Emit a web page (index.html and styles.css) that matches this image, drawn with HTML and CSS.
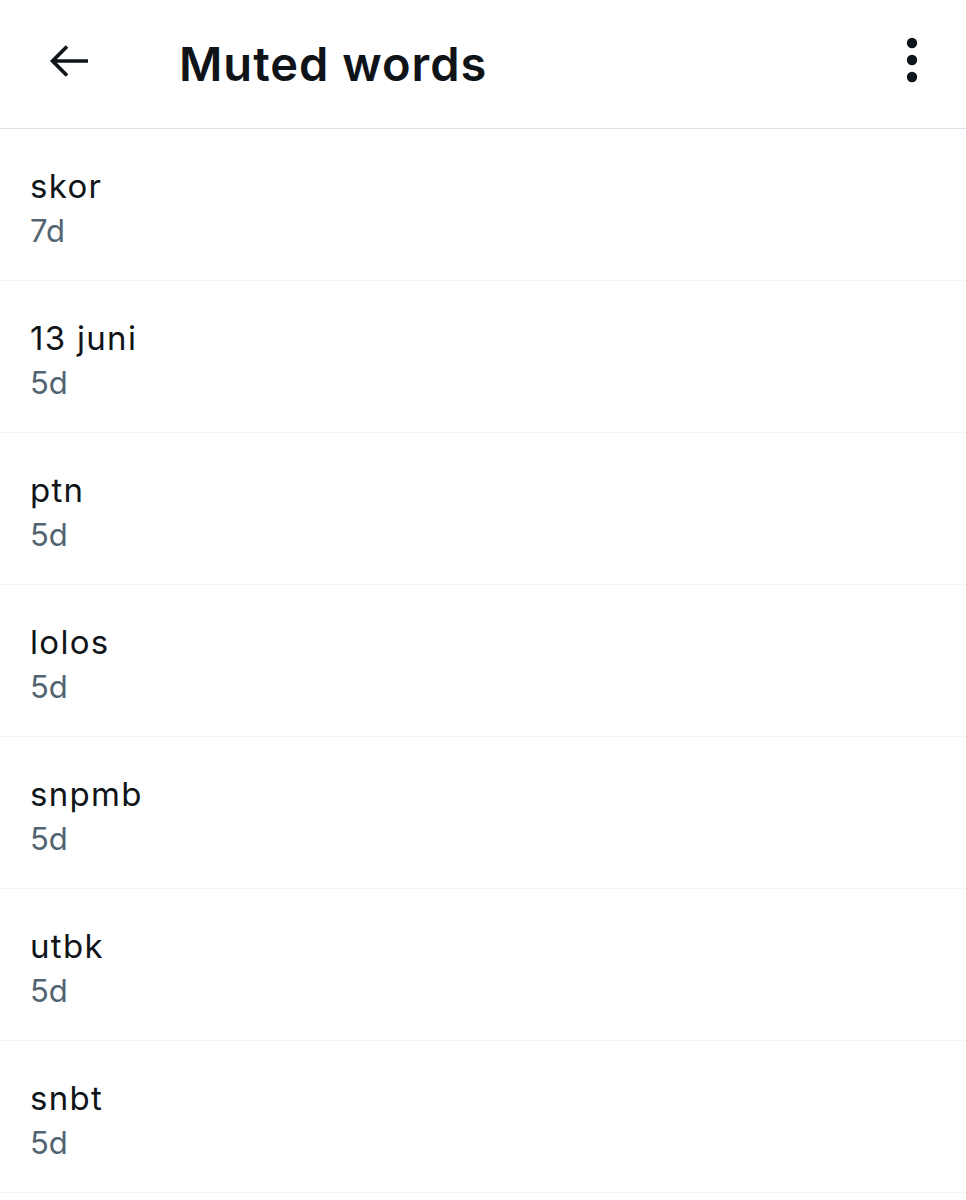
FILE: index.html
```html
<!DOCTYPE html>
<html>
<head>
<meta charset="utf-8">
<link rel="stylesheet" href="styles.css">
</head>
<body>
<header class="topbar">
  <div class="back">
    <svg width="44" height="44" viewBox="0 0 44 44"><path d="M42 22H8M21 7.5L6.5 22 21 36.5" fill="none" stroke="#0f1419" stroke-width="3.6" stroke-linecap="butt"/></svg>
  </div>
  <h1 class="title">Muted words</h1>
  <div class="more">
    <svg width="12" height="46" viewBox="0 0 12 46"><circle cx="6" cy="6" r="5.2" fill="#0f1419"/><circle cx="6" cy="23" r="5.2" fill="#0f1419"/><circle cx="6" cy="40" r="5.2" fill="#0f1419"/></svg>
  </div>
</header>
<ul class="list">
  <li class="item"><div class="word">skor</div><div class="age">7d</div></li>
  <li class="item"><div class="word">13 juni</div><div class="age">5d</div></li>
  <li class="item"><div class="word">ptn</div><div class="age">5d</div></li>
  <li class="item"><div class="word">lolos</div><div class="age">5d</div></li>
  <li class="item"><div class="word">snpmb</div><div class="age">5d</div></li>
  <li class="item"><div class="word">utbk</div><div class="age">5d</div></li>
  <li class="item"><div class="word">snbt</div><div class="age">5d</div></li>
</ul>
</body>
</html>
```
FILE: styles.css
```css
* { box-sizing: border-box; }
html, body { margin: 0; padding: 0; background: #fff; }
body { font-family: Inter, "Noto Sans", sans-serif; color: #0f1419; width: 966px; }
.topbar {
  height: 129px;
  display: flex;
  align-items: center;
  border-bottom: 1px solid #dfe3e5;
}
.back { width: 179px; padding-left: 46px; display: flex; align-items: center; margin-bottom: 7px; }
.back svg { display: block; }
.title {
  flex: 1;
  margin: 0;
  font-size: 47px;
  font-weight: 600;
  letter-spacing: 1px;
  line-height: 1;
  padding-bottom: 2px;
}
.more { width: 60px; display: flex; justify-content: flex-start; margin-bottom: 8px; }
.more svg { display: block; }
.list { list-style: none; margin: 0; padding: 0; }
.item {
  height: 152px;
  padding: 35px 30px 0;
  border-bottom: 1px solid #f1f3f4;
}
.word { font-size: 33px; line-height: 44px; letter-spacing: 1.3px; color: #0f1419; }
.age { font-size: 31px; line-height: 45px; color: #536471; }
```
